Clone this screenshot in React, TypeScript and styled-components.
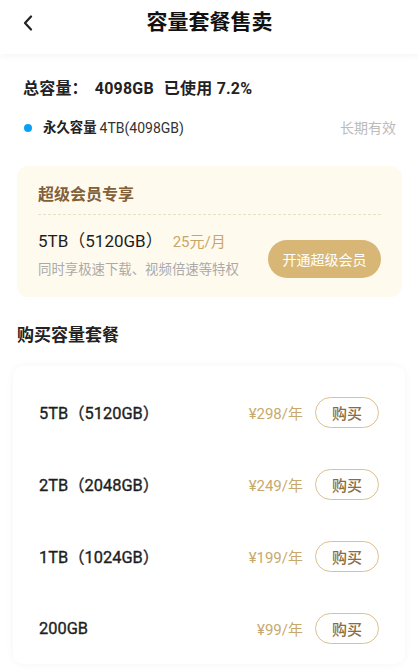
import React from "react";
import styled, { createGlobalStyle } from "styled-components";

const GlobalStyle = createGlobalStyle`
  body {
    margin: 0;
    background: #ffffff;
    font-family: Roboto, "Noto Sans CJK SC", sans-serif;
    color: #222;
  }
`;

const Page = styled.div`
  width: 419px;
  min-height: 670px;
  background: #fff;
`;

const Header = styled.div`
  height: 54px;
  display: flex;
  align-items: center;
  justify-content: center;
  position: relative;
  box-shadow: 0 3px 6px rgba(0, 0, 0, 0.035);
`;

const BackBtn = styled.div`
  position: absolute;
  left: 20px;
  top: 12px;
  width: 16px;
  height: 22px;
  display: flex;
  align-items: center;
  justify-content: center;
`;

const Title = styled.div`
  font-family: "Noto Sans CJK SC", sans-serif;
  font-size: 21px;
  font-weight: 700;
  color: #111;
  line-height: 28px;
  margin-top: -14px;
`;

const Summary = styled.div`
  padding: 24px 23px 0 23px;
`;

const TotalLine = styled.div`
  font-size: 16px;
  font-weight: 700;
  line-height: 22px;
  color: #222;
  letter-spacing: 0.2px;
`;

const Gap = styled.span<{ w: number }>`
  display: inline-block;
  width: ${(p) => p.w}px;
`;

const QuotaRow = styled.div`
  margin-top: 18px;
  display: flex;
  align-items: center;
  line-height: 20px;
`;

const Dot = styled.span`
  width: 8px;
  height: 8px;
  border-radius: 50%;
  background: #0aa0f5;
  margin-left: 1px;
  margin-right: 11px;
`;

const QuotaName = styled.span`
  font-size: 13.4px;
  font-weight: 700;
  color: #222;
  margin-right: 3px;
`;

const QuotaSize = styled.span`
  font-size: 14px;
  color: #333;
`;

const QuotaExpire = styled.span`
  margin-left: auto;
  font-size: 14px;
  color: #bbb;
`;

const VipCard = styled.div`
  margin: 28px 17px 0 17px;
  background: #fffaee;
  border-radius: 11px;
  padding: 18px 21px 18px 21px;
`;

const VipTitle = styled.div`
  font-size: 16px;
  font-weight: 700;
  line-height: 22px;
  color: #81603a;
  padding-bottom: 8px;
  border-bottom: 1px dashed #eadfc9;
`;

const VipBody = styled.div`
  display: flex;
  align-items: flex-end;
  justify-content: space-between;
  padding-top: 14px;
`;

const VipInfo = styled.div`
  display: flex;
  flex-direction: column;
`;

const VipMain = styled.div`
  display: flex;
  align-items: baseline;
  line-height: 24px;
`;

const VipSize = styled.span`
  font-size: 17px;
  color: #1d1d1d;
`;

const VipPrice = styled.span`
  font-size: 15px;
  color: #c8a66a;
  margin-left: 10px;
`;

const VipDesc = styled.div`
  margin-top: 7px;
  font-size: 13.4px;
  line-height: 18px;
  color: #aaa;
`;

const VipButton = styled.button`
  width: 113px;
  height: 38px;
  border: none;
  border-radius: 19px;
  background: #d8b776;
  color: #fff;
  font-family: "Noto Sans CJK SC", sans-serif;
  font-size: 14px;
  padding: 0;
  margin-bottom: 1px;
`;

const SectionTitle = styled.div`
  margin: 26px 17px 0 17px;
  font-size: 17px;
  font-weight: 700;
  line-height: 24px;
  color: #222;
`;

const ListCard = styled.div`
  margin: 19px 14px 0 13px;
  padding: 10px 26px 0 26px;
  background: #fff;
  border-radius: 10px;
  box-shadow: 0 0 8px rgba(0, 0, 0, 0.045);
`;

const PlanRow = styled.div`
  height: 72px;
  display: flex;
  align-items: center;
`;

const PlanName = styled.span`
  font-size: 16.4px;
  font-weight: 400;
  color: #1e1e1e;
  -webkit-text-stroke: 0.35px #1e1e1e;
`;

const PlanPrice = styled.span`
  margin-left: auto;
  font-size: 15px;
  color: #c9a96b;
  margin-right: 12px;
`;

const BuyButton = styled.button`
  width: 64px;
  height: 31px;
  border: 1.5px solid #dcc28d;
  border-radius: 16px;
  background: #fff;
  color: #8c6b3f;
  font-family: "Noto Sans CJK SC", sans-serif;
  font-size: 15px;
  font-weight: 500;
  padding: 0;
`;

const plans = [
  { name: "5TB（5120GB）", price: "¥298/年" },
  { name: "2TB（2048GB）", price: "¥249/年" },
  { name: "1TB（1024GB）", price: "¥199/年" },
  { name: "200GB", price: "¥99/年" },
];

export default function App() {
  return (
    <Page>
      <GlobalStyle />
      <Header>
        <BackBtn>
          <svg width="10" height="16" viewBox="0 0 10 16">
            <path d="M8 1.5 L2 8 L8 14.5" fill="none" stroke="#222" strokeWidth="2.2" strokeLinecap="round" strokeLinejoin="round" />
          </svg>
        </BackBtn>
        <Title>容量套餐售卖</Title>
      </Header>

      <Summary>
        <TotalLine>
          总容量：<Gap w={7} />4098GB<Gap w={10} />已使用 7.2%
        </TotalLine>
        <QuotaRow>
          <Dot />
          <QuotaName>永久容量</QuotaName>
          <QuotaSize>4TB(4098GB)</QuotaSize>
          <QuotaExpire>长期有效</QuotaExpire>
        </QuotaRow>
      </Summary>

      <VipCard>
        <VipTitle>超级会员专享</VipTitle>
        <VipBody>
          <VipInfo>
            <VipMain>
              <VipSize>5TB（5120GB）</VipSize>
              <VipPrice>25元/月</VipPrice>
            </VipMain>
            <VipDesc>同时享极速下载、视频倍速等特权</VipDesc>
          </VipInfo>
          <VipButton>开通超级会员</VipButton>
        </VipBody>
      </VipCard>

      <SectionTitle>购买容量套餐</SectionTitle>

      <ListCard>
        {plans.map((p) => (
          <PlanRow key={p.name}>
            <PlanName>{p.name}</PlanName>
            <PlanPrice>{p.price}</PlanPrice>
            <BuyButton>购买</BuyButton>
          </PlanRow>
        ))}
      </ListCard>
    </Page>
  );
}
